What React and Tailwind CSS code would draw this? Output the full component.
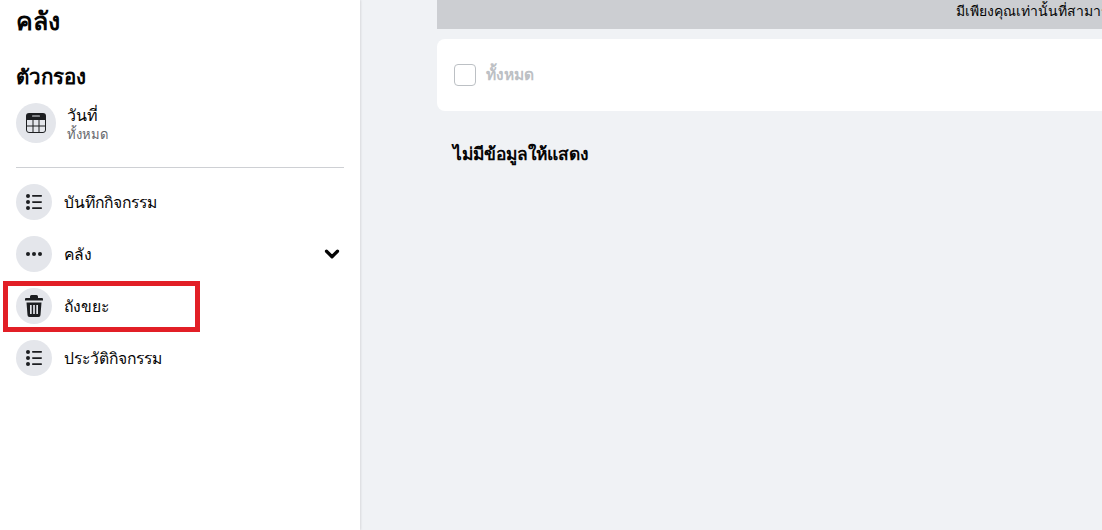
import { ChevronDown } from 'lucide-react'

const ListIcon = () => (
    <svg width="16" height="16" viewBox="0 0 16 16" fill="#1c1e21">
        <circle cx="2" cy="2" r="2" />
        <circle cx="2" cy="8" r="2" />
        <circle cx="2" cy="14" r="2" />
        <rect x="6" y="1" width="10" height="1.700" rx="0.800" />
        <rect x="6" y="7.200" width="10" height="1.700" rx="0.800" />
        <rect x="6" y="13.300" width="10" height="1.700" rx="0.800" />
    </svg>
)

const DotsIcon = () => (
    <svg width="16" height="16" viewBox="0 0 16 16" fill="#1c1e21">
        <circle cx="2" cy="8" r="2" />
        <circle cx="8" cy="8" r="2" />
        <circle cx="14" cy="8" r="2" />
    </svg>
)

const TrashIcon = () => (
    <svg width="18" height="22" viewBox="0 0 18 22" fill="#1c1e21">
        <path d="M6.500 0h5a1.500 1.500 0 0 1 1.500 1.500V3h4a1 1 0 0 1 1 1v1.500H0V4a1 1 0 0 1 1-1h4V1.500A1.500 1.500 0 0 1 6.500 0z" />
        <path fillRule="evenodd" d="M1.500 7.500h15l-1 12.500a2 2 0 0 1-2 2h-9a2 2 0 0 1-2-2zM5 10v9h1.700v-9zM8.150 10v9h1.700v-9zM11.300 10v9H13v-9z" />
    </svg>
)

const CalendarIcon = () => (
    <svg width="20" height="20" viewBox="0 0 20 20" fill="none">
        <path d="M3 0h14a3 3 0 0 1 3 3v4H0V3a3 3 0 0 1 3-3z" fill="#1c1e21" />
        <rect x="6" y="2.500" width="8" height="1" rx="0.500" fill="#e4e6eb" />
        <path d="M0.500 7v10A2.500 2.500 0 0 0 3 19.500h14A2.500 2.500 0 0 0 19.500 17V7M7 7v12.500M13 7v12.500M1 13h18" stroke="#1c1e21" strokeWidth="1" />
    </svg>
)

const NAV_ITEMS = [
    { label: 'บันทึกกิจกรรม', icon: <ListIcon /> },
    { label: 'คลัง', icon: <DotsIcon />, chevron: true },
    { label: 'ถังขยะ', icon: <TrashIcon /> },
    { label: 'ประวัติกิจกรรม', icon: <ListIcon /> },
]

const App = () => {
    return (
        <div className="relative flex h-[530px] w-[1102px] overflow-hidden bg-[#f0f2f5] font-['Noto_Sans','Liberation_Sans',sans-serif] text-[#050505]">
            <aside className="h-full w-[360px] shrink-0 bg-white px-4 shadow-[1px_0_2px_rgba(0,0,0,0.1)]">
                <h1 className="mt-[2px] h-[36px] text-[25px] leading-[36px] font-bold">คลัง</h1>
                <h2 className="mt-[21px] h-[34px] text-[20.500px] leading-[34px] font-semibold">ตัวกรอง</h2>
                <div className="mt-[10px] flex items-center gap-3">
                    <div className="flex h-10 w-10 items-center justify-center rounded-full bg-[#e4e6eb]">
                        <CalendarIcon />
                    </div>
                    <div className="ml-[-1px]">
                        <div className="h-[20px] text-[16px] leading-[20px]">วันที่</div>
                        <div className="h-[16px] text-[13px] leading-[18px] text-[#65676b]">ทั้งหมด</div>
                    </div>
                </div>
                <div className="mt-[24px] h-px w-[328px] bg-[#ced0d4]" />
                <nav className="mt-[16px] flex flex-col gap-4">
                    {NAV_ITEMS.map(item => (
                        <div key={item.label} className="flex h-9 items-center gap-3">
                            <div className="flex h-9 w-9 items-center justify-center rounded-full bg-[#e4e6eb]">
                                {item.icon}
                            </div>
                            <span className="flex-1 pt-px text-[15.700px]">{item.label}</span>
                            {item.chevron && <ChevronDown size={22} strokeWidth={3.500} className="mr-[1px]" />}
                        </div>
                    ))}
                </nav>
            </aside>

            <main className="flex-1 pl-[77px]">
                <div className="h-[29px] overflow-hidden bg-[#ccced2] pl-[519px] text-[14px] leading-[22px] whitespace-nowrap">
                    มีเพียงคุณเท่านั้นที่สามารถดูกิจกรรมของคุณได้
                </div>
                <div className="mt-[10px] flex h-[72px] items-center gap-[10px] rounded-l-lg bg-white pl-[17px]">
                    <div className="h-[22px] w-[22px] rounded-[4px] border border-[#bcc0c4]" />
                    <span className="text-[15.500px] font-semibold text-[#bcc0c4]">ทั้งหมด</span>
                </div>
                <p className="mt-[30px] pl-[16px] text-[17.400px] leading-[24px] font-bold">ไม่มีข้อมูลให้แสดง</p>
            </main>

            <div className="absolute top-[281px] left-[3px] h-[51px] w-[197px] border-[5px] border-[#e21f26]" />
        </div>
    )
}

export default App
